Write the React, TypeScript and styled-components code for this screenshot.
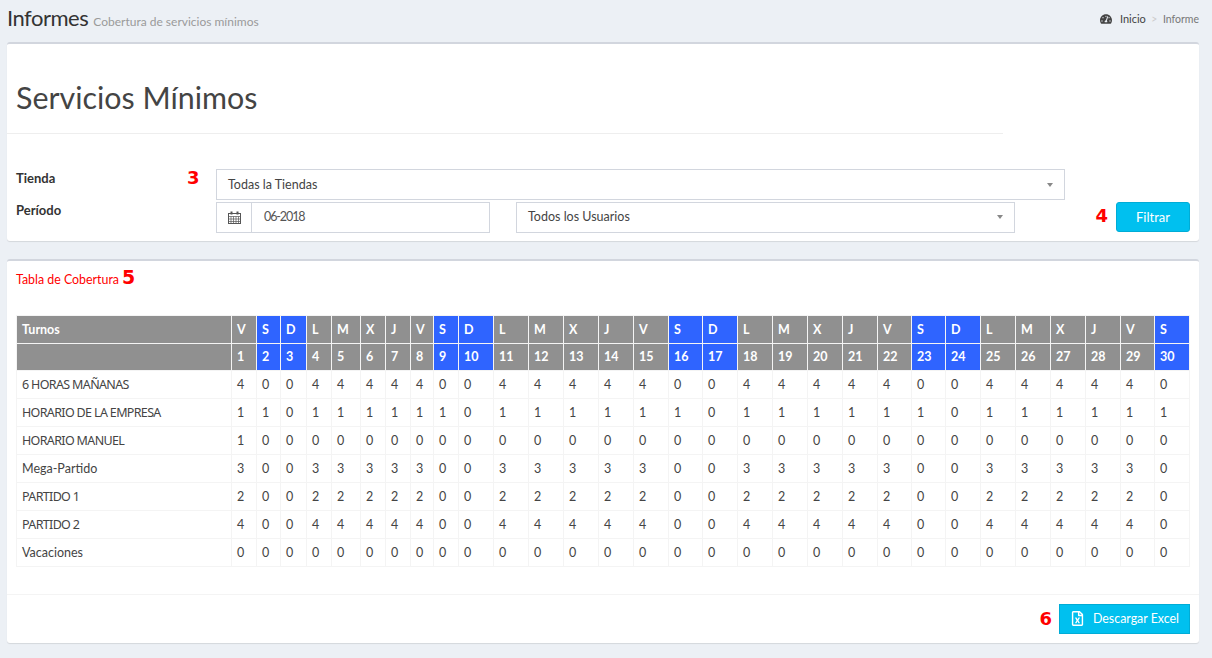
import styled, { createGlobalStyle } from "styled-components";
import { FaTachometerAlt, FaRegFileExcel } from "react-icons/fa";

const GlobalStyle = createGlobalStyle`
  html, body {
    margin: 0;
    padding: 0;
    background: #ecf0f5;
    font-family: Lato, "Noto Sans", "Liberation Sans", sans-serif;
    font-size: 13px;
    color: #333;
  }
  * { box-sizing: border-box; }
`;

const Page = styled.div`
  width: 1212px;
  height: 658px;
  overflow: hidden;
  padding: 0 13px 0 7px;
`;

const Header = styled.header`
  height: 42px;
  display: flex;
  justify-content: space-between;
  align-items: flex-start;
`;

const Title = styled.h1`
  margin: 3px 0 0;
  font-size: 22px;
  line-height: 29px;
  font-weight: 400;
  letter-spacing: -0.5px;
  color: #333;
  small {
    font-size: 12px;
    letter-spacing: 0;
    color: #9a9a9a;
  }
`;

const Crumbs = styled.div`
  margin: 12px 0 0 0;
  display: flex;
  align-items: center;
  gap: 5.5px;
  font-size: 10.5px;
  color: #777;
  b { font-weight: 400; font-size: 11px; color: #444; margin-left: 2px; }
  i { font-style: normal; color: #ccc; }
`;

const Card = styled.section`
  background: #fff;
  border-top: 2px solid #d2d6de;
  border-radius: 3px;
  box-shadow: 0 1px 1px rgba(0, 0, 0, 0.1);
`;

const FilterCard = styled(Card)`
  height: 199px;
  margin-bottom: 18px;
  padding-top: 28px;
`;

const PageTitle = styled.h2`
  margin: 0;
  width: 996px;
  height: 62px;
  padding: 0 0 0 9px;
  border-bottom: 1px solid #eee;
  font-size: 30.4px;
  line-height: 50px;
  font-weight: 400;
  color: #444;
`;

const FilterGrid = styled.div`
  margin-top: 35px;
  display: grid;
  grid-template-columns: 209px 849px 125px;
  grid-template-rows: 31px 31px;
  row-gap: 2px;
`;

const FieldLabel = styled.label`
  position: relative;
  padding: 0 0 0 9px;
  font-weight: 700;
  font-size: 13px;
  line-height: 18px;
  color: #333;
`;

const PeriodLabel = styled(FieldLabel)`
  line-height: 16px;
`;

const Marker = styled.span<{ $size?: number }>`
  font-family: "DejaVu Sans", sans-serif;
  font-weight: 700;
  font-size: ${(p) => p.$size ?? 18}px;
  line-height: 1;
  color: #f00;
`;

const LabelMarker = styled(Marker)`
  position: absolute;
  left: 180px;
  top: 0;
`;

const Select = styled.div<{ $width?: number; $lift?: number }>`
  height: 100%;
  width: ${(p) => (p.$width ? `${p.$width}px` : "100%")};
  border: 1px solid #d2d6de;
  padding: 0 11px ${(p) => p.$lift ?? 1}px;
  display: flex;
  align-items: center;
  justify-content: space-between;
  font-size: 12.5px;
  color: #444;
  &::after {
    content: "";
    margin: 1px 0 0;
    border-left: 3px solid transparent;
    border-right: 3px solid transparent;
    border-top: 4px solid #888;
  }
`;

const PeriodRow = styled.div`
  display: flex;
  gap: 26px;
`;

const DateGroup = styled.div`
  width: 274px;
  border: 1px solid #d2d6de;
  display: flex;
  align-items: center;
`;

const DateAddon = styled.span`
  width: 35px;
  height: 100%;
  border-right: 1px solid #d2d6de;
  display: flex;
  align-items: center;
  justify-content: center;
`;

const DateValue = styled.span`
  padding: 0 0 3px 12px;
  font-size: 12.5px;
  letter-spacing: -1.1px;
  color: #555;
`;

const FilterAction = styled.div`
  grid-column: 3;
  display: flex;
  justify-content: flex-end;
  align-items: flex-start;
  gap: 8px;
  span { margin-top: 5px; }
`;

const InfoButton = styled.button`
  background: #00c0ef;
  border: 1px solid #00acd6;
  color: #fff;
  font: inherit;
  height: 30px;
  display: flex;
  align-items: center;
  justify-content: center;
  gap: 8px;
`;

const FilterButton = styled(InfoButton)`
  width: 74px;
  border-radius: 3px;
`;

const TableCard = styled(Card)`
  height: 384px;
`;

const TableTitle = styled.div`
  padding: 7px 9px 0;
  height: 54px;
  color: #f00;
  font-size: 12.4px;
  display: flex;
  align-items: baseline;
  gap: 3px;
`;

const Coverage = styled.table`
  width: 1173px;
  margin-left: 9px;
  table-layout: fixed;
  border-collapse: collapse;
  font-size: 12.5px;
`;

const HeadCell = styled.th<{ $weekend?: boolean }>`
  height: 27.5px;
  padding: 0 0 0 5px;
  text-align: left;
  color: #fff;
  font-weight: 700;
  background: ${(p) => (p.$weekend ? "#2f64ff" : "#909090")};
  border: 1px solid #f4f4f4;
`;

const BodyCell = styled.td`
  height: 28px;
  padding: 0 0 1px 5px;
  border: 1px solid #f4f4f4;
  color: #444;
`;

const NameCell = styled(BodyCell)<{ $caps?: boolean }>`
  font-family: ${(p) => (p.$caps ? '"Noto Sans", sans-serif' : "inherit")};
  font-size: 12.5px;
  letter-spacing: ${(p) => (p.$caps ? "-0.65px" : "0")};
`;

const Footer = styled.div`
  margin-top: 27px;
  border-top: 1px solid #f4f4f4;
  padding: 9px 9px 0 0;
  display: flex;
  justify-content: flex-end;
  align-items: center;
  gap: 7px;
`;

const ExcelButton = styled(InfoButton)`
  width: 131px;
  font-size: 12.4px;
  padding-bottom: 2px;
`;

const CalendarIcon = () => (
  <svg width="13" height="13" viewBox="0 0 13 13" fill="none" stroke="#555">
    <rect x="0.5" y="2.5" width="12" height="10" />
    <path
      d="M0.5 5.5h12M0.5 8h12M0.5 10.5h12M3 5.5v7M5.5 5.5v7M8 5.5v7M10.5 5.5v7"
      strokeOpacity="0.7"
    />
    <path d="M3.5 0.5v3M9.5 0.5v3" strokeWidth="2" />
  </svg>
);

const columnEdges = [
  16, 231, 256, 280, 306, 331, 360, 385, 410, 433, 458, 493, 528, 563, 598, 633,
  668, 702, 737, 772, 807, 842, 877, 911, 945, 980, 1015, 1050, 1085, 1120, 1154, 1189,
];

const days = "VSDLMXJVSDLMXJVSDLMXJVSDLMXJVS".split("");

const shifts: [string, number][] = [
  ["6 HORAS MAÑANAS", 4],
  ["HORARIO DE LA EMPRESA", 1],
  ["HORARIO MANUEL", 0],
  ["Mega-Partido", 3],
  ["PARTIDO 1", 2],
  ["PARTIDO 2", 4],
  ["Vacaciones", 0],
];

const isWeekend = (day: string) => day === "S" || day === "D";

const cellValue = (name: string, value: number, day: string, index: number) => {
  if (name === "HORARIO MANUEL") return index === 0 ? 1 : 0;
  if (name === "HORARIO DE LA EMPRESA") return day === "D" ? 0 : 1;
  return isWeekend(day) ? 0 : value;
};

export default function App() {
  return (
    <Page>
      <GlobalStyle />
      <Header>
        <Title>
          Informes <small>Cobertura de servicios mínimos</small>
        </Title>
        <Crumbs>
          <FaTachometerAlt size={12} color="#444" />
          <b>Inicio</b>
          <i>&gt;</i>
          <span>Informe</span>
        </Crumbs>
      </Header>

      <FilterCard>
        <PageTitle>Servicios Mínimos</PageTitle>
        <FilterGrid>
          <FieldLabel>
            Tienda
            <LabelMarker>3</LabelMarker>
          </FieldLabel>
          <Select>Todas la Tiendas</Select>
          <span />
          <PeriodLabel>Período</PeriodLabel>
          <PeriodRow>
            <DateGroup>
              <DateAddon>
                <CalendarIcon />
              </DateAddon>
              <DateValue>06-2018</DateValue>
            </DateGroup>
            <Select $width={499} $lift={3}>
              Todos los Usuarios
            </Select>
          </PeriodRow>
          <FilterAction>
            <Marker>4</Marker>
            <FilterButton>Filtrar</FilterButton>
          </FilterAction>
        </FilterGrid>
      </FilterCard>

      <TableCard>
        <TableTitle>
          Tabla de Cobertura <Marker $size={19}>5</Marker>
        </TableTitle>
        <Coverage>
          <colgroup>
            {columnEdges.slice(1).map((edge, i) => (
              <col key={edge} width={edge - columnEdges[i]} />
            ))}
          </colgroup>
          <thead>
            <tr>
              <HeadCell>Turnos</HeadCell>
              {days.map((day, i) => (
                <HeadCell key={i} $weekend={isWeekend(day)}>
                  {day}
                </HeadCell>
              ))}
            </tr>
            <tr>
              <HeadCell />
              {days.map((day, i) => (
                <HeadCell key={i} $weekend={isWeekend(day)}>
                  {i + 1}
                </HeadCell>
              ))}
            </tr>
          </thead>
          <tbody>
            {shifts.map(([name, value]) => (
              <tr key={name}>
                <NameCell $caps={name === name.toUpperCase()}>{name}</NameCell>
                {days.map((day, i) => (
                  <BodyCell key={i}>{cellValue(name, value, day, i)}</BodyCell>
                ))}
              </tr>
            ))}
          </tbody>
        </Coverage>
        <Footer>
          <Marker $size={18}>6</Marker>
          <ExcelButton>
            <FaRegFileExcel size={15} />
            Descargar Excel
          </ExcelButton>
        </Footer>
      </TableCard>
    </Page>
  );
}
